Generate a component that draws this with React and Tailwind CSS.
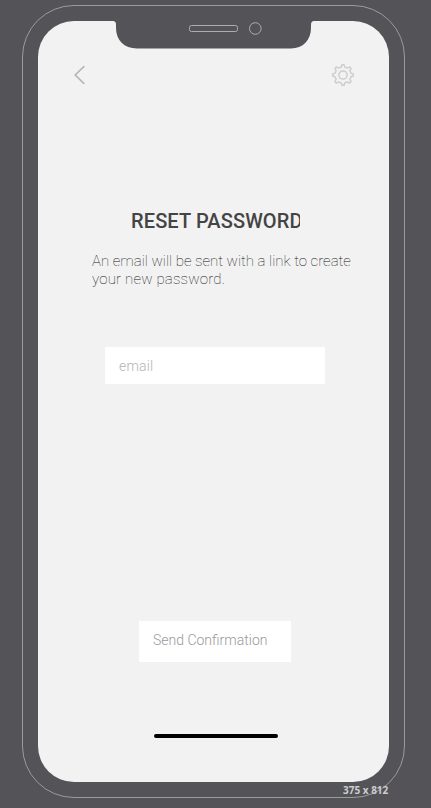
function Notch() {
  return (
    <svg width="197" height="30" viewBox="0 0 197 30" fill="none" className="-mt-px shrink-0 overflow-visible">
      <path d="M-2 0H199V1C197 1 196 2 196 5V8C196 20 188 28.5 176 28.5H22C9 28.5 1 20 1 8V5C1 2 0 1 -2 1Z" fill="#545358" />
      <rect x="74.5" y="5.5" width="48" height="6" rx="2" stroke="#adadb0" />
      <circle cx="140.3" cy="8.5" r="5.8" stroke="#adadb0" />
    </svg>
  );
}

function Back() {
  return (
    <svg width="12" height="20" viewBox="0 0 12 20" fill="none" stroke="#b5b5b5" strokeWidth="1.6">
      <path d="M10.3 1.2L1.2 10L10.3 18.8" />
    </svg>
  );
}

function Gear() {
  return (
    <svg width="24" height="24" viewBox="0 0 24 24" fill="none" stroke="#cecece" strokeWidth="1.5" strokeLinejoin="round">
      <path d="M10.3 4L10.9 1.7H13.1L13.7 4L16.4 5.1L18.5 3.9L20.1 5.5L18.9 7.6L20 10.3L22.3 10.9V13.1L20 13.7L18.9 16.4L20.1 18.5L18.5 20.1L16.4 18.9L13.7 20L13.1 22.3H10.9L10.3 20L7.6 18.9L5.5 20.1L3.9 18.5L5.1 16.4L4 13.7L1.7 13.1V10.9L4 10.3L5.1 7.6L3.9 5.5L5.5 3.9L7.6 5.1Z" />
      <circle cx="12" cy="12" r="4.1" />
    </svg>
  );
}

export default function App() {
  return (
    <div className="h-[808px] w-[431px] overflow-hidden bg-[#545358] pl-[22px] pt-[5px] font-['Roboto',sans-serif]">
      <div className="flex h-[793px] w-[383px] flex-col rounded-[52px] border border-[#9b9b9e] pl-[15px] pt-[15px]">
        <div className="flex h-[761px] w-[351px] shrink-0 flex-col overflow-hidden rounded-[36px] bg-[#f2f2f2]">
          <div className="flex h-[29px] shrink-0 pl-[77px]">
            <Notch />
          </div>
          <div className="mt-[13px] flex h-6 items-center justify-between pl-[36px] pr-[34px]">
            <Back />
            <Gear />
          </div>
          <h1 className="ml-[93px] mt-[121px] h-[26px] w-[169px] overflow-hidden whitespace-nowrap text-[20px] font-medium leading-[26px] tracking-[0.12px] text-[#444]">
            RESET PASSWORD
          </h1>
          <p className="ml-[54px] mt-[18px] h-9 whitespace-nowrap text-[15px] font-thin leading-[18px] text-[#111]">
            An email will be sent with a link to create
            <br />
            <span className="tracking-[0.18px]">your new password.</span>
          </p>
          <div className="ml-[67px] mt-[59px] flex h-[37px] w-[220px] items-center bg-white pl-[14px] pt-[2px] text-[14px] font-light tracking-[0.2px] text-[#b4b4b4]">
            email
          </div>
          <button className="ml-[101px] mt-[237px] flex h-[41px] w-[152px] bg-white pl-[14px] pt-[9px] text-left text-[14px] font-light leading-[20px] text-[#999]">
            <span className="w-[114px] overflow-hidden whitespace-nowrap">Send Confirmation</span>
          </button>
          <div className="ml-[116px] mt-[72px] h-[4px] w-[124px] shrink-0 rounded-full bg-black" />
        </div>
        <div className="ml-[305px] h-[15px] w-[47px] shrink-0 overflow-hidden whitespace-nowrap font-['Open_Sans',sans-serif] text-[10px] font-bold leading-[16px] text-[#cdcdd0]">
          375 x 812
        </div>
      </div>
    </div>
  );
}
